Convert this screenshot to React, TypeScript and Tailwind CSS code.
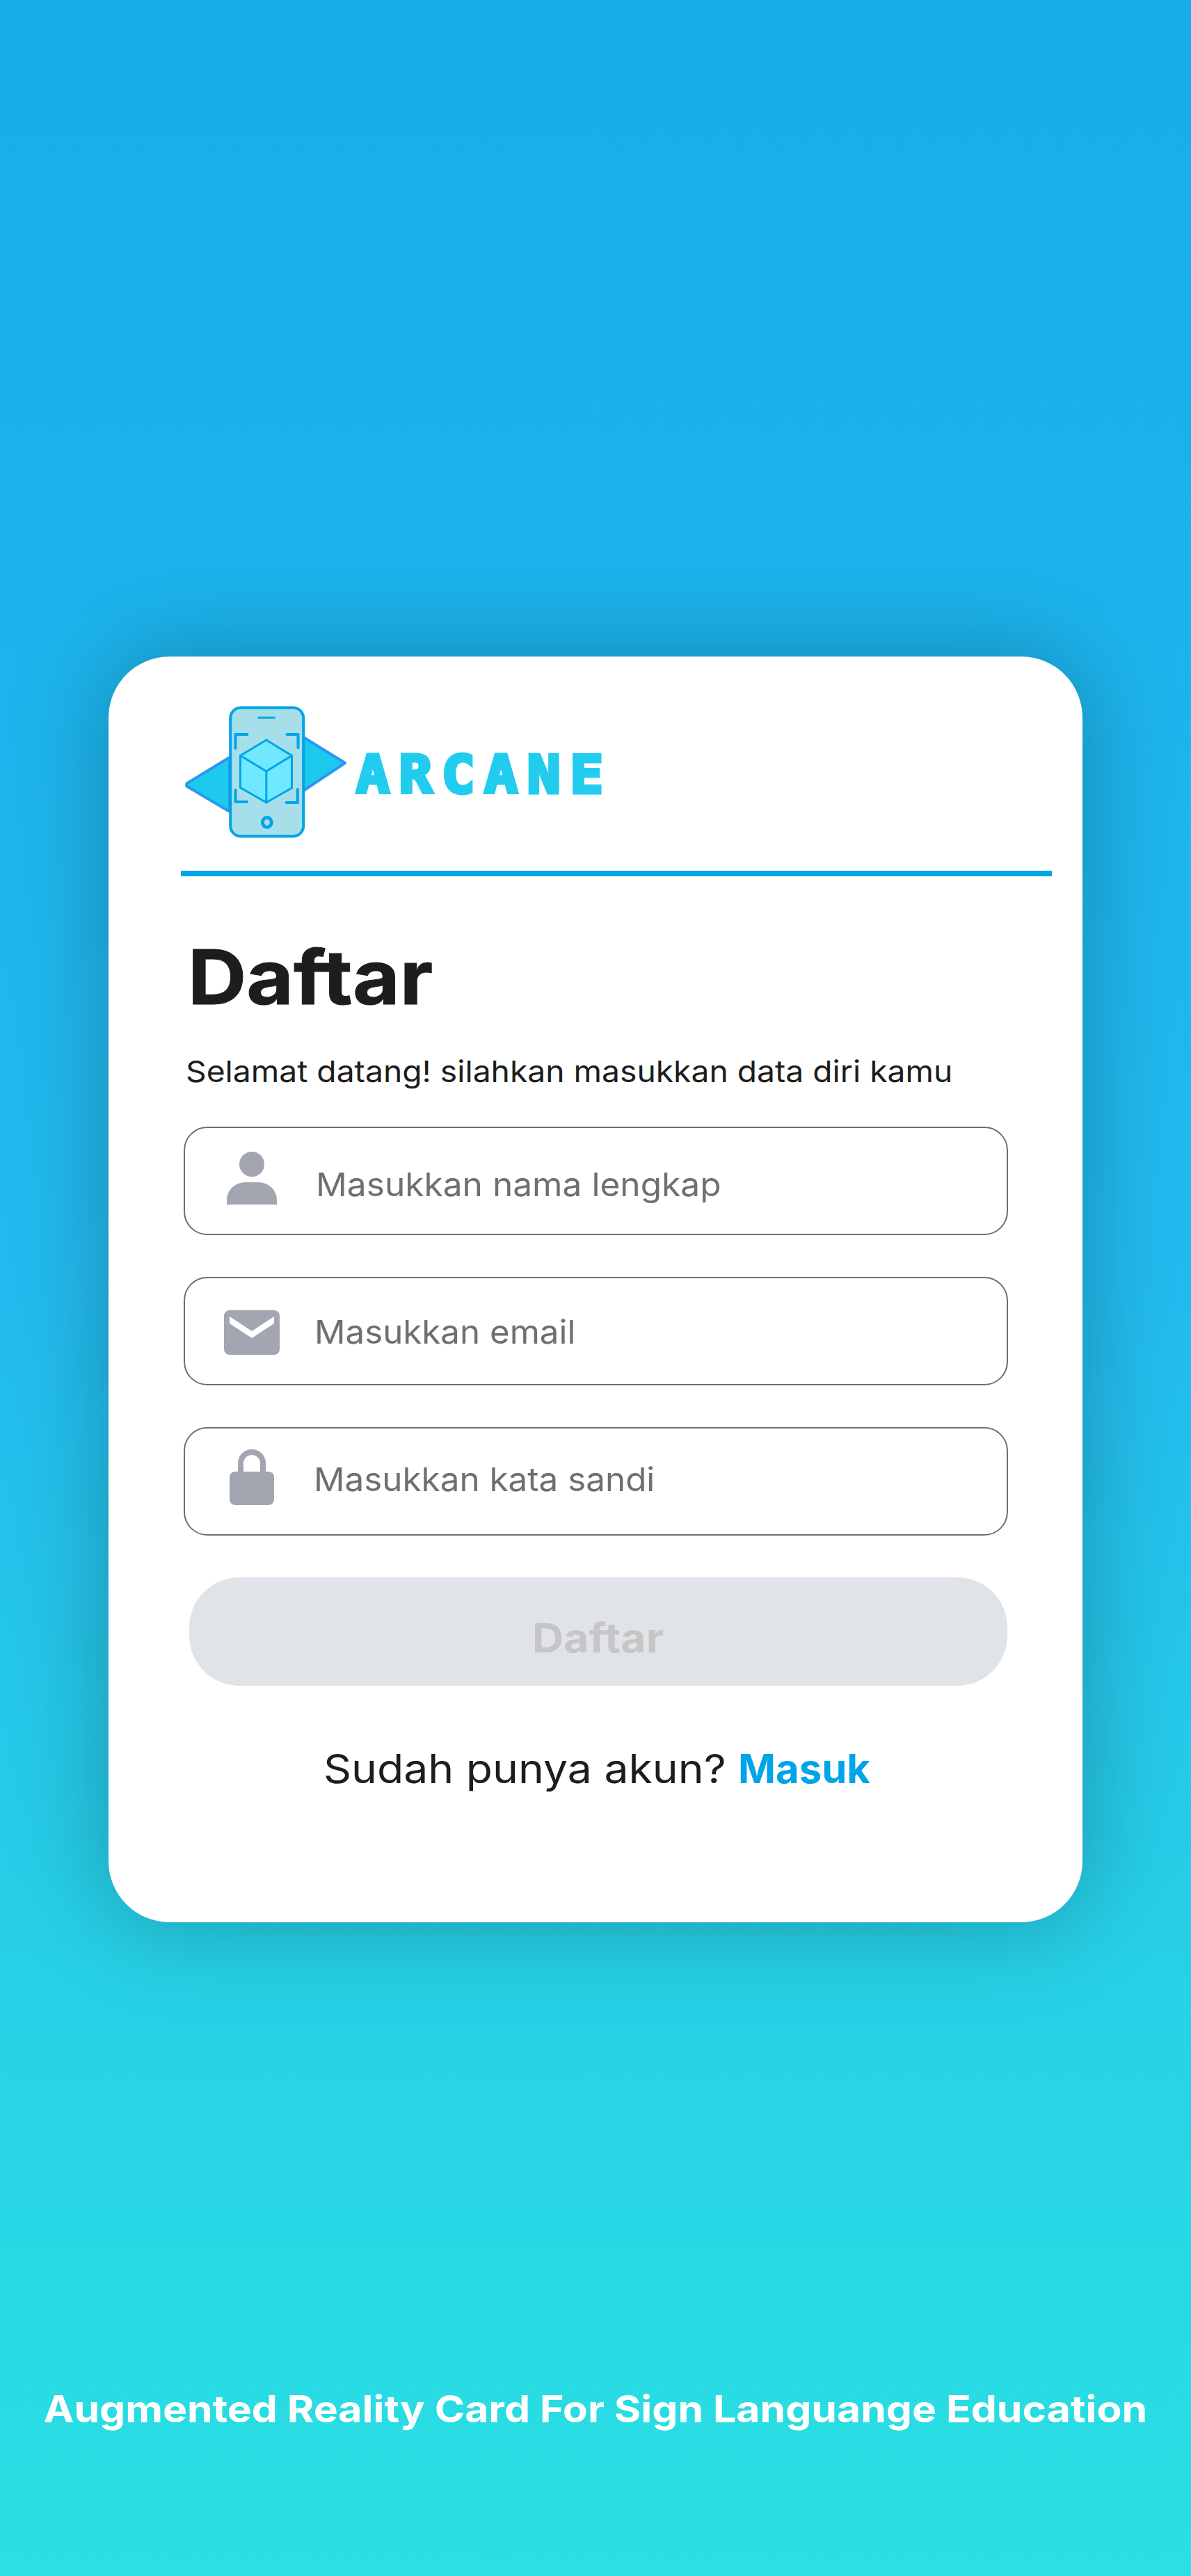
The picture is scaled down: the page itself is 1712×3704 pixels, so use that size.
import type { ReactNode } from "react";

function Logo() {
  return (
    <svg viewBox="0 0 270 230" className="h-[230px] w-[270px] shrink-0">
      <path d="M80 99 L18.500 136.500 Q17.500 138.500 18.500 140.500 L80 177 Z" fill="#1dcaee" stroke="#2b98ee" strokeWidth="4" strokeLinejoin="round" />
      <path d="M186 70 L246 107 L186 147 Z" fill="#1dcaee" stroke="#2b98ee" strokeWidth="4" strokeLinejoin="round" />
      <rect x="81.200" y="27.500" width="105" height="185" rx="15" fill="#a6dfea" stroke="#00a4e8" strokeWidth="4" />
      <g fill="none" stroke="#00a4e8" strokeLinecap="round" strokeLinejoin="round">
        <path d="M122 42 H144.500" strokeWidth="3.200" />
        <path d="M88.500 86 V66 H105.500 M162.500 66 H178.500 V85 M88.500 146 V163 H105 M161.500 164 H177.800 V145" strokeWidth="4" />
        <path d="M132.800 74 L169.500 96.500 V143 L132.800 164 L95.500 142.500 V96.500 Z" fill="#70e8ff" strokeWidth="3" />
        <path d="M95.500 96.500 L132.800 119 L169.500 96.500 M132.800 119 V164" strokeWidth="3" />
        <ellipse cx="133.800" cy="192.500" rx="6.500" ry="7" strokeWidth="4.800" />
      </g>
    </svg>
  );
}

function PersonIcon() {
  return (
    <svg viewBox="0 0 80 80" className="h-20 w-20" fill="#a3a6b0">
      <circle cx="40" cy="22" r="18" />
      <path d="M4 80 V74 C4 58 17 48 31 48 H49 C63 48 76 58 76 74 V80 Z" />
    </svg>
  );
}

function MailIcon() {
  return (
    <svg viewBox="0 0 80 80" className="h-20 w-20">
      <rect x="0" y="8" width="80" height="64" rx="8" fill="#a3a6b0" />
      <path d="M8 17 L40 38 L72 17 V27 L40 48 L8 27 Z" fill="#fff" />
    </svg>
  );
}

function LockIcon() {
  return (
    <svg viewBox="0 0 80 80" className="h-20 w-20">
      <rect x="8" y="32" width="64" height="48" rx="8" fill="#a3a6b0" />
      <path d="M24 34 V20 A16 16 0 0 1 56 20 V34" fill="none" stroke="#a3a6b0" strokeWidth="8" />
    </svg>
  );
}

function Field({ icon, children }: { icon: ReactNode; children: ReactNode }) {
  return (
    <div className="flex h-[156px] w-[1185px] items-start rounded-[34px] border-2 border-[#706f6f] pl-[56px] text-[47px] leading-[56px] text-[#706f6f]">
      {icon}
      {children}
    </div>
  );
}

export default function App() {
  return (
    <div className="flex h-[3704px] w-[1712px] flex-col items-center overflow-hidden bg-[linear-gradient(180deg,#16adea_0%,#22bbef_50%,#27d1e6_77%,#2ae0e3_100%)] pt-[944px] font-['Inter',sans-serif] whitespace-nowrap">
      <main className="h-[1820px] w-[1400px] rounded-[88px] bg-white pt-[46px] pl-[94px] text-[#1d1d1b] shadow-[0_0_145px_rgba(0,0,0,0.27)]">
        <header className="flex h-[262px] items-start">
          <Logo />
          <span className="mt-[79px] -ml-[8px] origin-left scale-x-[1.06] font-['DejaVu_Sans_Mono',monospace] text-[75px] leading-[90px] font-bold tracking-[12.800px] text-[#22ccee] [-webkit-text-stroke:5px_#22ccee]">ARCANE</span>
        </header>
        <div className="ml-[10px] h-2 w-[1252px] bg-[#00a4e8]" />
        <h1 className="mt-[79px] ml-[20px] origin-left scale-x-[1.08] text-[108px] leading-[132px] font-bold [-webkit-text-stroke:1px_#1d1d1b]">Daftar</h1>
        <p className="mt-[43px] ml-[17px] origin-left scale-x-[1.075] text-[43px] leading-[52px]">Selamat datang! silahkan masukkan data diri kamu</p>
        <form className="mt-[54px] ml-[14px] flex flex-col gap-[60px]">
          <Field icon={<div className="mt-[30px]"><PersonIcon /></div>}>
            <span className="mt-[53px] ml-[52px] origin-left scale-x-[1.056]">Masukkan nama lengkap</span>
          </Field>
          <Field icon={<div className="mt-[38px]"><MailIcon /></div>}>
            <span className="mt-[49px] ml-[50px] origin-left scale-x-[1.048]">Masukkan email</span>
          </Field>
          <Field icon={<div className="mt-[30px]"><LockIcon /></div>}>
            <span className="mt-[45px] ml-[49px] origin-left scale-x-[1.05]">Masukkan kata sandi</span>
          </Field>
          <button type="button" className="ml-2 flex h-[156px] w-[1176px] items-center justify-center rounded-[72px] bg-[#e0e4e9] pt-[18px] text-[58px] font-bold text-[#c6c6c6]">
            <span className="scale-x-[1.08]">Daftar</span>
          </button>
        </form>
        <p className="mt-[84px] ml-[215px] flex text-[58px] leading-[70px]">
          <span className="w-[600px] origin-left scale-x-[1.077]">Sudah punya akun?</span>
          <a className="-ml-[4px] font-bold text-[#00a4e8]">Masuk</a>
        </p>
      </main>
      <footer className="mt-[667px] scale-x-[1.09] text-[54px] leading-[66px] font-bold text-white">Augmented Reality Card For Sign Languange Education</footer>
    </div>
  );
}
